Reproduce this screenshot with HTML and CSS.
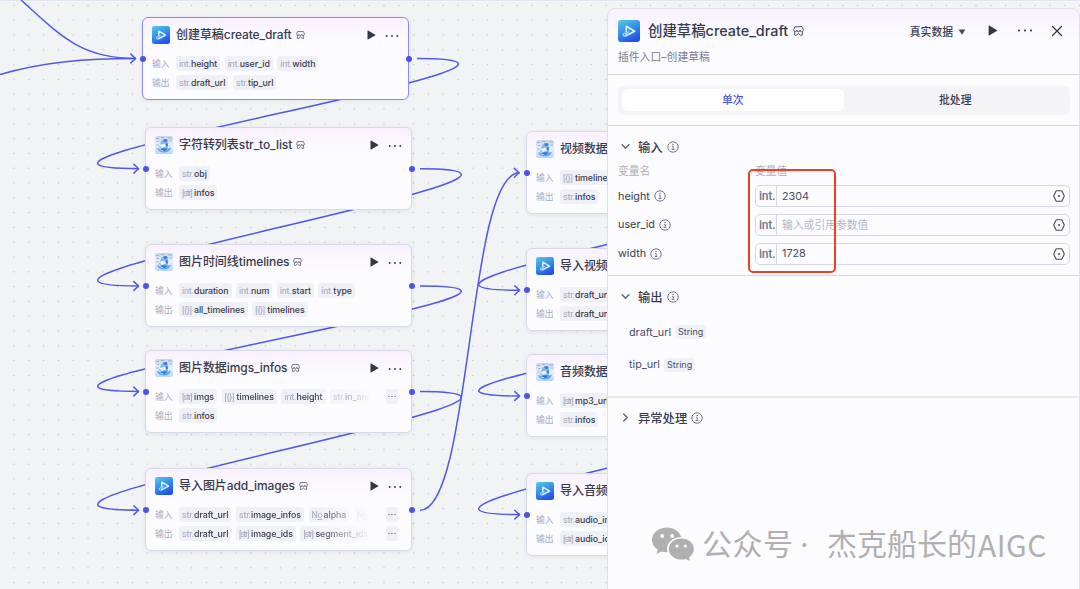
FILE: index.html
```
<!DOCTYPE html>
<html lang="zh-CN">
<head>
    <meta charset="UTF-8">
    <meta name="viewport" content="width=device-width, initial-scale=1.0">
    <title>创建草稿create_draft</title>
    <link rel="stylesheet" href="styles.css">
</head>
<body>
    <!-- Shared icons -->
    <svg class="defs" width="0" height="0">
        <defs>
            <linearGradient id="blueGrad" x1="0.1" y1="0" x2="0.6" y2="1">
                <stop offset="0" stop-color="#55c5e6"/>
                <stop offset="0.5" stop-color="#3590ec"/>
                <stop offset="1" stop-color="#2450e4"/>
            </linearGradient>
            <linearGradient id="iceGrad" x1="0" y1="0" x2="0" y2="1">
                <stop offset="0" stop-color="#c3d6ec"/>
                <stop offset="0.5" stop-color="#e6f1fb"/>
                <stop offset="1" stop-color="#b9d6f2"/>
            </linearGradient>
        </defs>
        <symbol id="plugin" viewBox="0 0 18 18">
            <rect width="18" height="18" rx="2.5" fill="url(#blueGrad)"/>
            <path d="M6.8 9.8V5.2l6.8 4-7.2 3.6" fill="none" stroke="#e4f4ff" stroke-width="1.4" stroke-linejoin="round" stroke-linecap="round"/>
            <circle cx="5.4" cy="12" r="1.2" fill="none" stroke="#bfe3ff" stroke-width="0.9"/>
            <path d="M6.3 11.2 9.6 9.2" stroke="#bfe3ff" stroke-width="0.8"/>
        </symbol>
        <symbol id="robot" viewBox="0 0 18 18">
            <rect width="18" height="18" rx="2.5" fill="url(#iceGrad)"/>
            <path d="M1 2.5h3M2 5.5h2M13 2h4M14.5 5h2.5M1 9h3M6 1.5h3" stroke="#8aa9d0" stroke-width="0.8"/>
            <path d="M2 12.5Q4 16.6 9 16.6T16 12l-2 .3Q12 15.2 8.5 15.2T4 12.3z" fill="#5ea6ec"/>
            <path d="M6.5 4.5 11.5 3.5 13.2 7 12.8 12 7.5 13.5 4 11z" fill="#7fb7f0"/>
            <path d="M8 3.6 11.5 3 12.8 5 9.5 6.2z" fill="#3b78dc"/>
            <path d="M4.2 9 9.5 7.6 11 10.4 6.8 12z" fill="#eaf4fe"/>
            <path d="M11 7.2l1.8.4-.2 3-1.600-.6z" fill="#3a72d8"/>
            <path d="M4.5 13 9 12.2 13.5 12.6l-4 2.600z" fill="#2f76e2"/>
        </symbol>
        <symbol id="store" viewBox="0 0 10 9">
            <path d="M1.8.6h6.4L9.3 3v.7a1.4 1.4 0 0 1-2.8 0 1.5 1.5 0 0 1-3 0A1.4 1.4 0 0 1 .7 3.7V3zM1.5 5.3v3h1.700L5 6.700l1.800 1.600h1.700v-3" fill="none" stroke="#4a4d63" stroke-width="0.85" stroke-linejoin="round"/>
        </symbol>
        <symbol id="play" viewBox="0 0 8 9">
            <path d="M.9.4 7.4 4.2q.4.3 0 .6L.9 8.6Q.4 8.8.4 8.2V.8Q.4.2.9.4z" fill="#343749"/>
        </symbol>
        <symbol id="more" viewBox="0 0 14 4">
            <circle cx="1.7" cy="2" r="0.95" fill="#343749"/>
            <circle cx="7" cy="2" r="0.95" fill="#343749"/>
            <circle cx="12.3" cy="2" r="0.95" fill="#343749"/>
        </symbol>
        <symbol id="info" viewBox="0 0 12 12">
            <circle cx="6" cy="6" r="5.2" fill="none" stroke="#72758f" stroke-width="1"/>
            <circle cx="6" cy="3.5" r="0.75" fill="#72758f"/>
            <path d="M4.9 5.4h1.3v3M4.6 8.5h2.9" fill="none" stroke="#72758f" stroke-width="0.95"/>
        </symbol>
        <symbol id="hex" viewBox="0 0 12 12">
            <path d="M4 .7h4q.6 0 1 .5l2 4q.4.8 0 1.600l-2 4q-.4.500-1 .500H4q-.6 0-1-.500l-2-4q-.4-.8 0-1.600l2-4Q3.400.7 4 .7z" fill="none" stroke="#45485c" stroke-width="1.1" stroke-linejoin="round"/>
            <circle cx="6" cy="6" r="1" fill="#45485c"/>
        </symbol>
        <symbol id="chevron" viewBox="0 0 10 10">
            <path d="M1.9 3.4 5 6.6l3.1-3.2" fill="none" stroke="#5e6178" stroke-width="1.3" stroke-linecap="round" stroke-linejoin="round"/>
        </symbol>
    </svg>

    <div class="canvas">
        <svg class="edges" width="1080" height="589">
            <defs>
                <pattern id="dots" width="14.8" height="14.8" patternUnits="userSpaceOnUse" x="6.6" y="-2">
                    <circle cx="7.4" cy="7.4" r="0.75" fill="#c2c3ca"/>
                </pattern>
                <marker id="arrow" viewBox="0 0 8 12" refX="7.2" refY="6" markerWidth="8" markerHeight="12" markerUnits="userSpaceOnUse">
                    <path d="M2 1.6 6.8 6 2 10.4" fill="none" stroke="#5157e8" stroke-width="1.5" stroke-linecap="round" stroke-linejoin="round"/>
                </marker>
            </defs>
            <rect width="1080" height="589" fill="url(#dots)"/>
            <path d="M21 0C60 35 80 58.5 136 58.5"/>
            <path d="M0 74.5C44 62 85 58.5 136 58.5" marker-end="url(#arrow)"/>
            <path d="M417 58.5C633 58.5 -77 168.7 139 168.7" marker-end="url(#arrow)"/>
            <path d="M420 168.7C636 168.7 -77 286 139 286" marker-end="url(#arrow)"/>
            <path d="M420 286C636 286 -77 391.5 139 391.5" marker-end="url(#arrow)"/>
            <path d="M420 391.5C636 391.5 -77 510.2 139 510.2" marker-end="url(#arrow)"/>
            <path d="M420 510.3C472 510.3 467 172.8 519.5 172.8" marker-end="url(#arrow)"/>
            <path d="M801 173.2C1017 173.2 304 290.3 520 290.3" marker-end="url(#arrow)"/>
            <path d="M801 290.3C1017 290.3 304 396 520 396" marker-end="url(#arrow)"/>
            <path d="M801 396C1017 396 304 514.6 520 514.6" marker-end="url(#arrow)"/>
        </svg>

        <div class="node n1 selected">
            <i class="port port-in"></i><i class="port port-out"></i>
            <div class="node-head">
                <svg class="logo"><use href="#plugin"/></svg>
                <span class="title">创建草稿<b>create_draft</b></span>
                <svg class="store"><use href="#store"/></svg>
                <svg class="play"><use href="#play"/></svg>
                <svg class="more"><use href="#more"/></svg>
            </div>
            <div class="row"><label>输入</label><div class="tags">
                <span class="tag"><em>int.</em>height</span><span class="tag"><em>int.</em>user_id</span><span class="tag"><em>int.</em>width</span>
            </div></div>
            <div class="row"><label>输出</label><div class="tags">
                <span class="tag"><em>str.</em>draft_url</span><span class="tag"><em>str.</em>tip_url</span>
            </div></div>
        </div>

        <div class="node n2">
            <i class="port port-in"></i><i class="port port-out"></i>
            <div class="node-head">
                <svg class="logo"><use href="#robot"/></svg>
                <span class="title">字符转列表<b>str_to_list</b></span>
                <svg class="store"><use href="#store"/></svg>
                <svg class="play"><use href="#play"/></svg>
                <svg class="more"><use href="#more"/></svg>
            </div>
            <div class="row"><label>输入</label><div class="tags">
                <span class="tag"><em>str.</em>obj</span>
            </div></div>
            <div class="row"><label>输出</label><div class="tags">
                <span class="tag"><em class="arr">[str]</em>infos</span>
            </div></div>
        </div>

        <div class="node n3">
            <i class="port port-in"></i><i class="port port-out"></i>
            <div class="node-head">
                <svg class="logo"><use href="#robot"/></svg>
                <span class="title">图片时间线<b>timelines</b></span>
                <svg class="store"><use href="#store"/></svg>
                <svg class="play"><use href="#play"/></svg>
                <svg class="more"><use href="#more"/></svg>
            </div>
            <div class="row"><label>输入</label><div class="tags">
                <span class="tag"><em>int.</em>duration</span><span class="tag"><em>int.</em>num</span><span class="tag"><em>int.</em>start</span><span class="tag"><em>int.</em>type</span>
            </div></div>
            <div class="row"><label>输出</label><div class="tags">
                <span class="tag"><em class="obj">[{}]</em>all_timelines</span><span class="tag"><em class="obj">[{}]</em>timelines</span>
            </div></div>
        </div>

        <div class="node n4">
            <i class="port port-in"></i><i class="port port-out"></i>
            <div class="node-head">
                <svg class="logo"><use href="#robot"/></svg>
                <span class="title">图片数据<b>imgs_infos</b></span>
                <svg class="store"><use href="#store"/></svg>
                <svg class="play"><use href="#play"/></svg>
                <svg class="more"><use href="#more"/></svg>
            </div>
            <div class="row"><label>输入</label><div class="tags fade">
                <span class="tag"><em class="arr">[str]</em>imgs</span><span class="tag"><em class="obj">[{}]</em>timelines</span><span class="tag"><em>int.</em>height</span><span class="tag"><em>str.</em>in_ani</span>
            </div><span class="rest"><svg><use href="#more"/></svg></span></div>
            <div class="row"><label>输出</label><div class="tags">
                <span class="tag"><em>str.</em>infos</span>
            </div></div>
        </div>

        <div class="node n5">
            <i class="port port-in"></i><i class="port port-out"></i>
            <div class="node-head">
                <svg class="logo"><use href="#plugin"/></svg>
                <span class="title">导入图片<b>add_images</b></span>
                <svg class="store"><use href="#store"/></svg>
                <svg class="play"><use href="#play"/></svg>
                <svg class="more"><use href="#more"/></svg>
            </div>
            <div class="row"><label>输入</label><div class="tags fade">
                <span class="tag"><em>str.</em>draft_url</span><span class="tag"><em>str.</em>image_infos</span><span class="tag"><em class="num">N<u>o</u></em>alpha</span><span class="tag"><em class="num">N<u>o</u></em></span>
            </div><span class="rest"><svg><use href="#more"/></svg></span></div>
            <div class="row"><label>输出</label><div class="tags fade">
                <span class="tag"><em>str.</em>draft_url</span><span class="tag"><em class="arr">[str]</em>image_ids</span><span class="tag"><em class="arr">[str]</em>segment_ids</span>
            </div><span class="rest"><svg><use href="#more"/></svg></span></div>
        </div>

        <div class="node n6">
            <i class="port port-in"></i>
            <div class="node-head">
                <svg class="logo"><use href="#robot"/></svg>
                <span class="title">视频数据</span>
            </div>
            <div class="row"><label>输入</label><div class="tags">
                <span class="tag"><em class="obj">[{}]</em>timelines</span>
            </div></div>
            <div class="row"><label>输出</label><div class="tags">
                <span class="tag"><em>str.</em>infos</span>
            </div></div>
        </div>

        <div class="node n7">
            <i class="port port-in"></i>
            <div class="node-head">
                <svg class="logo"><use href="#plugin"/></svg>
                <span class="title">导入视频</span>
            </div>
            <div class="row"><label>输入</label><div class="tags">
                <span class="tag"><em>str.</em>draft_url</span>
            </div></div>
            <div class="row"><label>输出</label><div class="tags">
                <span class="tag"><em>str.</em>draft_url</span>
            </div></div>
        </div>

        <div class="node n8">
            <i class="port port-in"></i>
            <div class="node-head">
                <svg class="logo"><use href="#robot"/></svg>
                <span class="title">音频数据</span>
            </div>
            <div class="row"><label>输入</label><div class="tags">
                <span class="tag"><em class="arr">[str]</em>mp3_urls</span>
            </div></div>
            <div class="row"><label>输出</label><div class="tags">
                <span class="tag"><em>str.</em>infos</span>
            </div></div>
        </div>

        <div class="node n9">
            <i class="port port-in"></i>
            <div class="node-head">
                <svg class="logo"><use href="#plugin"/></svg>
                <span class="title">导入音频</span>
            </div>
            <div class="row"><label>输入</label><div class="tags">
                <span class="tag"><em>str.</em>audio_infos</span>
            </div></div>
            <div class="row"><label>输出</label><div class="tags">
                <span class="tag"><em class="arr">[str]</em>audio_ids</span>
            </div></div>
        </div>
    </div>

    <aside class="panel">
        <header>
            <div class="panel-head">
                <svg class="logo"><use href="#plugin"/></svg>
                <h1>创建草稿<b>create_draft</b></h1>
                <svg class="store"><use href="#store"/></svg>
                <span class="mode">真实数据</span>
                <svg class="caret" viewBox="0 0 8 6"><path d="M.6.4h6.8L4 5.8z" fill="#45485c"/></svg>
                <svg class="play"><use href="#play"/></svg>
                <svg class="more"><use href="#more"/></svg>
                <svg class="close" viewBox="0 0 12 12"><path d="M1.5 1.5l9 9m0-9l-9 9" stroke="#343749" stroke-width="1.3" stroke-linecap="round"/></svg>
            </div>
            <p>插件入口–创建草稿</p>
        </header>

        <div class="tabs-wrap">
            <div class="tabs">
                <span class="tab active">单次</span>
                <span class="tab">批处理</span>
            </div>
        </div>

        <section class="inputs">
            <h2><svg class="chev"><use href="#chevron"/></svg>输入<svg class="info"><use href="#info"/></svg></h2>
            <div class="field heads"><span>变量名</span><span>变量值</span></div>
            <div class="field">
                <span class="name">height<svg class="info"><use href="#info"/></svg></span>
                <div class="box"><em>int.</em><span class="val">2304</span><svg><use href="#hex"/></svg></div>
            </div>
            <div class="field">
                <span class="name">user_id<svg class="info"><use href="#info"/></svg></span>
                <div class="box"><em>int.</em><span class="val hint">输入或引用参数值</span><svg><use href="#hex"/></svg></div>
            </div>
            <div class="field">
                <span class="name">width<svg class="info"><use href="#info"/></svg></span>
                <div class="box"><em>int.</em><span class="val">1728</span><svg><use href="#hex"/></svg></div>
            </div>
            <div class="mark"></div>
        </section>

        <section class="outputs">
            <h2><svg class="chev"><use href="#chevron"/></svg>输出<svg class="info"><use href="#info"/></svg></h2>
            <div class="out">draft_url<span>String</span></div>
            <div class="out">tip_url<span>String</span></div>
        </section>

        <section class="errors">
            <h2><svg class="chev closed"><use href="#chevron"/></svg>异常处理<svg class="info"><use href="#info"/></svg></h2>
        </section>

        <div class="watermark">
            <svg viewBox="0 0 42 34">
                <path d="M15 .5C6.7.5 0 6 0 13c0 4 2.2 7.3 5.7 9.6L4.5 27l5-2.6c1.9.6 4 .9 6.2.8-2.8-8.7 5-15.4 13.6-15C27.5 4.5 21.8.5 15 .5z" fill="#b0b0b1"/>
                <path d="M29.3 11.5C22.3 11.5 16.8 16 16.8 22s5.5 10.6 12.5 10.6c1.6 0 3.2-.3 4.6-.7l4.1 2.1-1.1-3.6c3-2 4.9-5 4.9-8.4 0-6-5.5-10.5-12.5-10.5z" fill="#b0b0b1"/>
                <g fill="#fcfcff"><circle cx="10.2" cy="9" r="2"/><circle cx="20.2" cy="9" r="2"/><circle cx="25" cy="19" r="1.6"/><circle cx="33.3" cy="19" r="1.6"/></g>
            </svg>
            <span class="w1">公众号</span><span class="w2">·</span><span class="w3">杰克船长的</span><span class="w4">AIGC</span>
        </div>
    </aside>
</body>
</html>
```
FILE: styles.css
```
* { box-sizing: border-box; }
body { margin: 0; width: 1080px; height: 589px; overflow: hidden; position: relative; font-family: Inter, "Noto Sans CJK SC", sans-serif; color: #383b4d; background: #f2f3f5; }
em { font-style: normal; }
svg { display: block; flex: none; }
.defs { position: absolute; }

/* Canvas */
.canvas { position: absolute; inset: 0; border-top: 1px solid #e4e3f1; }
.edges { position: absolute; left: 0; top: -1px; }
.edges > path { fill: none; stroke: #5157e8; stroke-width: 1.5; }

/* Nodes */
.node {
    position: absolute;
    width: 267px;
    height: 83px;
    padding: 8px 9px 0;
    border: 1px solid #d9d8e8;
    border-radius: 6px;
    background: linear-gradient(#f9f1fe, #fcfcff 28px);
    box-shadow: 0 1px 4px rgba(40, 40, 80, 0.08);
}
.selected { border-color: #8d89f2; }
.n1 { left: 142px; top: 16px; }
.n2 { left: 145px; top: 126px; }
.n3 { left: 145px; top: 243px; }
.n4 { left: 145px; top: 349px; }
.n5 { left: 145px; top: 467px; }
.n6 { left: 526px; top: 130px; }
.n7 { left: 526px; top: 247px; }
.n8 { left: 526px; top: 353px; }
.n9 { left: 526px; top: 472px; }
.port { position: absolute; top: 38px; width: 6px; height: 6px; border-radius: 50%; background: #4d53e8; }
.port-in { left: -3.5px; }
.port-out { right: -3.5px; }
.node-head { display: flex; align-items: center; height: 18px; margin-bottom: 12px; }
.logo { width: 18px; height: 18px; }
.title { margin-left: 6px; font-size: 12px; font-weight: 500; line-height: 16px; padding-bottom: 1px; letter-spacing: -0.05px; white-space: nowrap; }
.title b, h1 b { font-weight: 500; }
.title b { letter-spacing: -0.1px; }
.store { width: 9px; height: 8px; margin-left: 4px; }
.play { width: 8px; height: 9px; margin-left: auto; }
.more { width: 14px; height: 4px; margin: 0 0 0 10px; }
.node .play { width: 9px; height: 10px; margin-right: -1px; }
.node .more { position: relative; top: 1px; }

.row { display: flex; align-items: center; height: 15px; margin-bottom: 4.4px; }
.row label { width: 24px; flex: none; font-size: 8.8px; color: #a9abc0; }
.tags { display: flex; gap: 4.5px; }
.fade { width: 192px; overflow: hidden; -webkit-mask-image: linear-gradient(90deg, #000 135px, transparent 192px); mask-image: linear-gradient(90deg, #000 135px, transparent 192px); }
.tag { display: flex; align-items: center; flex: none; height: 15px; padding: 0 3px; border-radius: 3px; background: #f0f0f7; font-size: 8.8px; font-weight: 500; letter-spacing: -0.05px; }
.tag em { width: 12px; font-family: Roboto, sans-serif; font-size: 9px; font-weight: 400; letter-spacing: -0.2px; color: #a3a5bd; }
.tag em.arr { letter-spacing: -1.2px; }
.tag em.obj { letter-spacing: -0.3px; }
.tag em.num { letter-spacing: -0.6px; }
.rest { display: flex; align-items: center; justify-content: center; width: 12px; height: 15px; margin-left: 15px; border-radius: 3px; background: #f0f0f7; }
.rest svg.more, .rest svg { width: 8px; height: 3px; }

/* Side panel */
.panel {
    position: absolute;
    left: 607px;
    top: 8px;
    width: 473px;
    height: 590px;
    border: 1px solid #dfdeeb;
    border-radius: 8px 8px 0 0;
    background: linear-gradient(#f9f1fe, #fcfcff 34px);
}
header { height: 66px; padding: 9px 16px 0 10px; border-bottom: 1px solid #d5d5e3; }
.panel-head { display: flex; align-items: center; height: 25px; }
.panel-head .logo { width: 22px; height: 22px; }
h1 { margin: 0 0 0 8px; font-size: 14.4px; font-weight: 500; line-height: 20px; white-space: nowrap; }
.panel-head .store { width: 11px; height: 10px; margin-left: 5px; }
.mode { margin-left: auto; font-size: 10.8px; font-weight: 500; }
.caret { width: 8px; height: 6px; margin: 2px 0 0 5px; }
.panel-head .play { width: 10px; height: 11px; margin-left: 22px; }
.panel-head .more { width: 16px; height: 5px; margin-left: 19px; }
.close { width: 12px; height: 12px; margin-left: 18px; }
header p { margin: 7px 0 0; font-size: 10.8px; line-height: 16px; color: #7b7d94; }

.tabs-wrap { height: 51px; padding: 10.5px 9px 0 10px; border-bottom: 1px solid #d5d5e3; }
.tabs { display: flex; height: 29px; padding: 3.5px; border-radius: 6px; background: #f4f4f7; }
.tab { flex: 1; display: flex; align-items: center; justify-content: center; padding-bottom: 3px; border-radius: 6px; font-size: 10.8px; font-weight: 500; }
.tab.active { background: #fff; color: #4d53e8; }

section { position: relative; }
h2 { display: flex; align-items: center; height: 15px; margin: 0; font-size: 12.3px; font-weight: 500; }
.chev { width: 11px; height: 11px; margin: 0 7px 0 2px; }
.closed { transform: rotate(-90deg); }
.info { width: 12px; height: 12px; margin-left: 4px; }
.inputs { height: 150px; padding: 13px 9px 0 10px; border-bottom: 1px solid #d5d5e3; }
.field { display: flex; align-items: center; height: 22px; margin-bottom: 6.8px; font-size: 10.8px; }
.field > span { width: 137px; display: flex; align-items: center; }
.field.heads { height: 16px; margin: 8px 0 7px; padding-bottom: 1px; font-size: 10.8px; color: #b1b2b8; }
.box { flex: 1; display: flex; align-items: center; height: 22px; padding-right: 4px; border: 1px solid #d6d6e6; border-radius: 5px; }
.box em { width: 21px; height: 20px; padding-left: 3px; line-height: 20px; font-family: Roboto, sans-serif; font-size: 12px; letter-spacing: -0.2px; font-weight: 500; color: #72758f; border-right: 1px solid #d6d6e6; }
.val { flex: 1; margin-left: 5px; color: #4a4d60; }
.hint { padding-bottom: 2px; color: #b4b6c9; font-size: 10.8px; }
.box svg { width: 12px; height: 12px; }
.mark { position: absolute; left: 140px; top: 43px; width: 88px; height: 104px; border: 2.5px solid #ed4027; border-radius: 5px; }

.outputs { height: 122px; padding: 13px 10px 0; border-bottom: 2px solid #e9e9f2; }
.out { display: flex; align-items: center; height: 16px; margin: 20px 0 0 11px; font-size: 10.8px; color: #4a4d60; }
.out + .out { margin-top: 16.5px; }
.out span { margin-left: 4px; padding: 0 3px; height: 14px; line-height: 14px; border-radius: 3px; background: #f0f0f7; font-size: 9px; }
.errors { padding: 12px 10px 0; }

.watermark { display: flex; align-items: center; height: 44px; margin: 97px 0 0 44px; color: #b0b0b1; font-size: 30px; font-weight: 400; line-height: 44px; }
.watermark svg { width: 42px; height: 34px; margin-right: 8px; }
.w1 { width: 98px; letter-spacing: 0.5px; }
.w2 { width: 27px; }
.w4 { margin-left: 1px; font-family: "Noto Sans CJK SC", sans-serif; letter-spacing: 0.5px; }
```
